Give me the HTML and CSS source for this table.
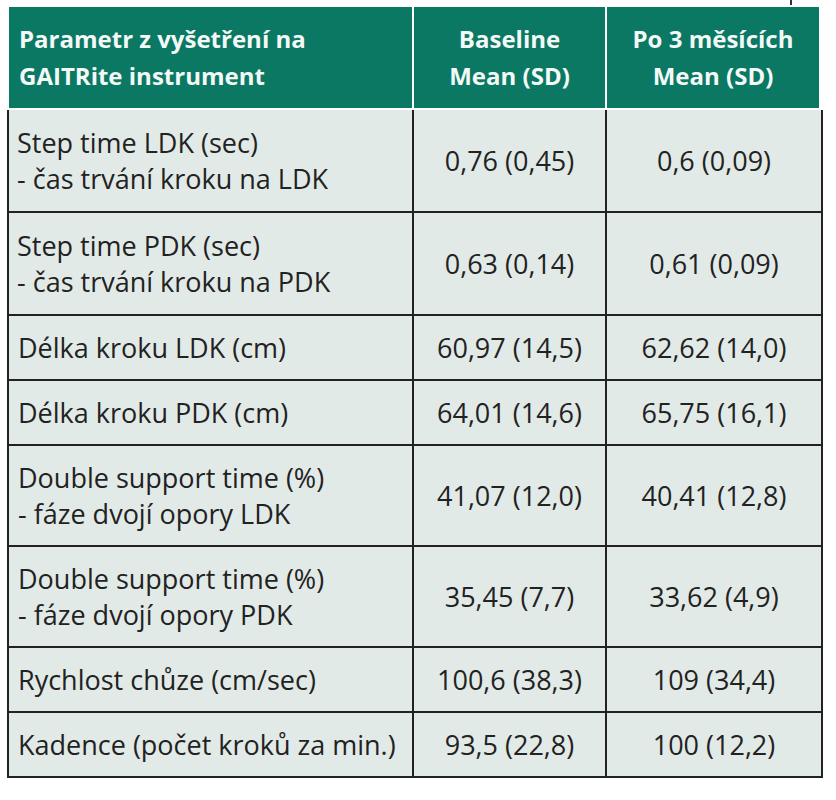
FILE: index.html
```html
<!DOCTYPE html>
<html lang="cs">
<head>
<meta charset="utf-8">
<title>GAITRite</title>
<link rel="stylesheet" href="styles.css">
</head>
<body>
<div class="tick"></div>
<div class="sheet">
  <div class="head">
    <div class="hcell left">Parametr z vyšetření na<br>GAITRite instrument</div>
    <div class="hcell">Baseline<br>Mean (SD)</div>
    <div class="hcell">Po 3 měsících<br>Mean (SD)</div>
  </div>
  <table class="data">
    <colgroup><col class="c1"><col class="c2"><col class="c3"></colgroup>
    <tbody>
      <tr class="tall"><td>Step time LDK (sec)<br>- čas trvání kroku na LDK</td><td>0,76 (0,45)</td><td>0,6 (0,09)</td></tr>
      <tr class="tall"><td>Step time PDK (sec)<br>- čas trvání kroku na PDK</td><td>0,63 (0,14)</td><td>0,61 (0,09)</td></tr>
      <tr><td>Délka kroku LDK (cm)</td><td>60,97 (14,5)</td><td>62,62 (14,0)</td></tr>
      <tr><td>Délka kroku PDK (cm)</td><td>64,01 (14,6)</td><td>65,75 (16,1)</td></tr>
      <tr><td>Double support time (%)<br>- fáze dvojí opory LDK</td><td>41,07 (12,0)</td><td>40,41 (12,8)</td></tr>
      <tr><td>Double support time (%)<br>- fáze dvojí opory PDK</td><td>35,45 (7,7)</td><td>33,62 (4,9)</td></tr>
      <tr><td>Rychlost chůze (cm/sec)</td><td>100,6 (38,3)</td><td>109 (34,4)</td></tr>
      <tr><td>Kadence (počet kroků za min.)</td><td>93,5 (22,8)</td><td>100 (12,2)</td></tr>
    </tbody>
  </table>
</div>
</body>
</html>
```
FILE: styles.css
```css
html, body {
  margin: 0;
  padding: 0;
  background: #ffffff;
}
body {
  font-family: "Open Sans", "Noto Sans", sans-serif;
  color: #222;
  position: relative;
}
.tick {
  position: absolute;
  left: 790px;
  top: 0;
  width: 2px;
  height: 5px;
  background: #333;
}
.sheet {
  padding: 7px 0 0 7px;
  width: 814px;
}
.head {
  display: grid;
  grid-template-columns: 403px 191px 212px;
  column-gap: 2px;
  margin: 0 2px;
  width: 810px;
  background: #ffffff;
}
.hcell {
  background: #0b7864;
  color: #f4f8f6;
  font-weight: 700;
  font-size: 24px;
  line-height: 37px;
  text-align: center;
  height: 101px;
  box-sizing: border-box;
  padding-top: 13px;
}
.hcell.left {
  text-align: left;
  padding-left: 10px;
}
.data {
  margin-top: 2px;
  border-collapse: collapse;
  table-layout: fixed;
  width: 814px;
  background: #e2eae7;
}
.c1 { width: 405px; }
.c2 { width: 193px; }
.c3 { width: 216px; }
.data td {
  border: 2px solid #222;
  font-size: 27px;
  line-height: 36px;
  padding: 14px 8px 13px;
  text-align: center;
  vertical-align: middle;
}
.data tr.tall td {
  padding: 15px 8px 14px;
}
.data tr:first-child td {
  border-top: none;
  padding-top: 15px;
}
.data td:first-child {
  text-align: left;
  padding-left: 9px;
}
```
